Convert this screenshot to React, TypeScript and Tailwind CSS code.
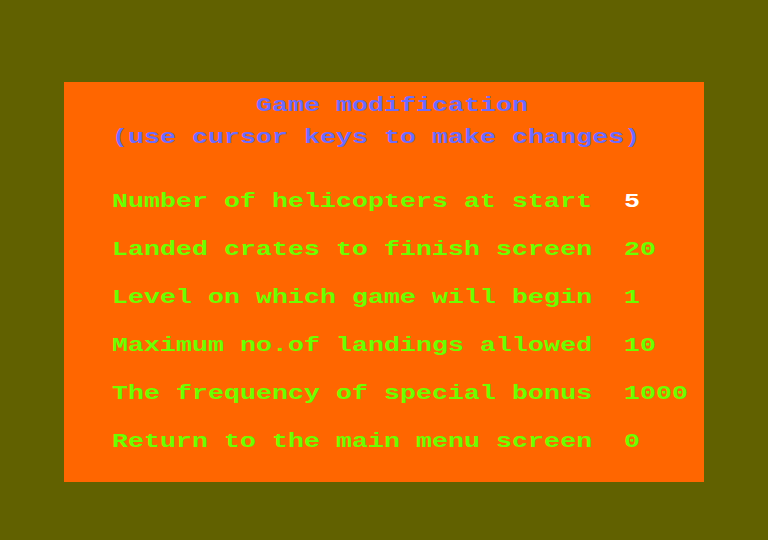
const rows = [
  { label: 'Number of helicopters at start', value: '5', white: true },
  { label: 'Landed crates to finish screen', value: '20' },
  { label: 'Level on which game will begin', value: '1' },
  { label: 'Maximum no.of landings allowed', value: '10' },
  { label: 'The frequency of special bonus', value: '1000' },
  { label: 'Return to the main menu screen', value: '0' },
]

// one text cell = 16x16px, like the 40x25 screen it copies.
// glyphs are stretched sideways to get the chunky 8x8 look
const txt = 'inline-block origin-left scale-x-[1.27]'

export default function App() {
  return (
    <div className="w-[768px] h-[540px] bg-[#616100] pt-[82px] pl-[64px] overflow-hidden">
      <div
        className="w-[640px] h-[400px] bg-[#ff6600] pt-[16px] flex flex-col font-bold text-[21px] leading-[16px] whitespace-pre"
        style={{ fontFamily: '"Liberation Mono", "DejaVu Sans Mono", monospace' }}
      >
        <div className="h-4 pl-[192px] text-[#6b6bff]"><span className={txt}>Game modification</span></div>
        <div className="h-4 mt-4 pl-[48px] text-[#6b6bff]"><span className={txt}>(use cursor keys to make changes)</span></div>
        <div className="mt-[48px] flex flex-col gap-[32px] pl-[48px]">
          {rows.map(r => (
            <div key={r.label} className="h-4 grid grid-cols-[512px_auto]">
              <span className={`${txt} text-[#6bff00]`}>{r.label}</span>
              <span className={`${txt} ${r.white ? 'text-white' : 'text-[#6bff00]'}`}>{r.value}</span>
            </div>
          ))}
        </div>
      </div>
    </div>
  )
}
